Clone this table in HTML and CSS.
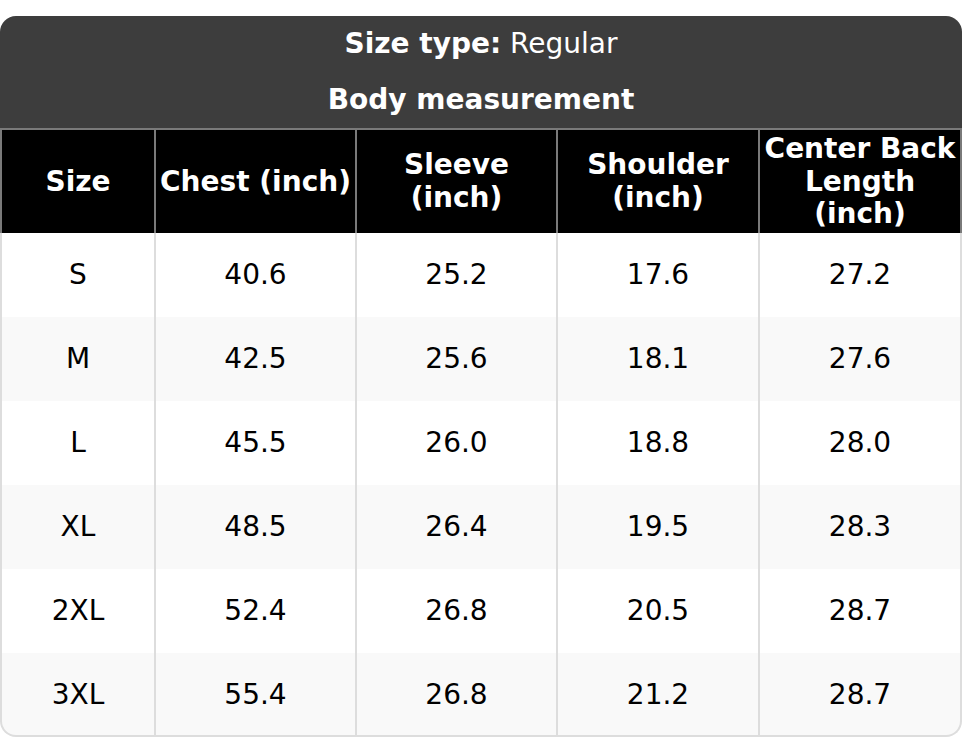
FILE: index.html
```html
<!DOCTYPE html>
<html lang="en">
<head>
<meta charset="utf-8">
<title>Size chart</title>
<link rel="stylesheet" href="styles.css">
</head>
<body>
<table class="chart">
  <colgroup>
    <col class="c1">
    <col class="c2">
    <col class="c3">
    <col class="c4">
    <col class="c5">
  </colgroup>
  <thead>
    <tr class="title-row">
      <th class="title title-top" colspan="5"><b>Size type:</b> Regular</th>
    </tr>
    <tr class="title-row">
      <th class="title title-sub" colspan="5">Body measurement</th>
    </tr>
    <tr class="head-row">
      <th class="col first">Size</th>
      <th class="col">Chest (inch)</th>
      <th class="col">Sleeve<br>(inch)</th>
      <th class="col">Shoulder<br>(inch)</th>
      <th class="col">Center Back<br>Length<br>(inch)</th>
    </tr>
  </thead>
  <tbody>
    <tr><td class="first">S</td><td>40.6</td><td>25.2</td><td>17.6</td><td>27.2</td></tr>
    <tr><td class="first">M</td><td>42.5</td><td>25.6</td><td>18.1</td><td>27.6</td></tr>
    <tr><td class="first">L</td><td>45.5</td><td>26.0</td><td>18.8</td><td>28.0</td></tr>
    <tr><td class="first">XL</td><td>48.5</td><td>26.4</td><td>19.5</td><td>28.3</td></tr>
    <tr><td class="first">2XL</td><td>52.4</td><td>26.8</td><td>20.5</td><td>28.7</td></tr>
    <tr class="last"><td class="first">3XL</td><td>55.4</td><td>26.8</td><td>21.2</td><td>28.7</td></tr>
  </tbody>
</table>
</body>
</html>
```
FILE: styles.css
```css
html, body {
  margin: 0;
  padding: 0;
  background: #ffffff;
}

body {
  padding-top: 16px;
  font-family: "DejaVu Sans", "Liberation Sans", sans-serif;
  font-size: 28px;
  color: #000000;
}

.chart {
  width: 962px;
  table-layout: fixed;
  border-collapse: separate;
  border-spacing: 0;
  text-align: center;
}

.c1 { width: 156px; }
.c2 { width: 201px; }
.c3 { width: 201px; }
.c4 { width: 202px; }
.c5 { width: 202px; }

.chart th,
.chart td {
  box-sizing: border-box;
  white-space: nowrap;
}

.title {
  background: #3d3d3d;
  color: #ffffff;
  padding: 12px 4px;
  line-height: 32px;
}

.title-top {
  font-weight: normal;
  border-top-left-radius: 16px;
  border-top-right-radius: 16px;
}

.title-top b {
  font-weight: bold;
}

.title-sub {
  font-weight: bold;
}

.col {
  background: #000000;
  color: #ffffff;
  font-weight: bold;
  line-height: 32.6px;
  padding: 3px 2px 2px;
  border-top: 2px solid #7a7a7a;
  border-right: 2px solid #7a7a7a;
}

.col.first {
  border-left: 2px solid #7a7a7a;
}

.chart td {
  padding: 25px 4px;
  line-height: 34px;
  border-right: 2px solid #dddddd;
  background: #ffffff;
}

.chart td.first {
  border-left: 2px solid #dddddd;
}

.chart tbody tr:nth-child(even) td {
  background: #f9f9f9;
}

.chart tr.last td {
  padding-bottom: 23px;
  border-bottom: 2px solid #dddddd;
}

.chart tr.last td.first {
  border-bottom-left-radius: 16px;
}

.chart tr.last td:last-child {
  border-bottom-right-radius: 16px;
}
```
